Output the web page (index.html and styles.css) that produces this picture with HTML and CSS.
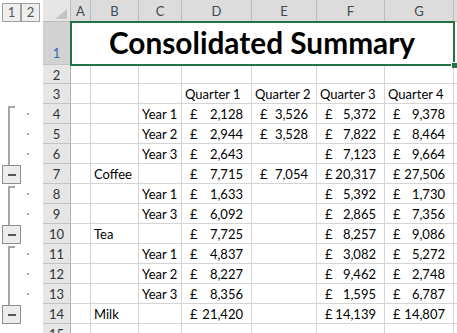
FILE: index.html
```html
<!DOCTYPE html>
<html lang="en">
<head>
    <meta charset="UTF-8">
    <meta name="viewport" content="width=device-width, initial-scale=1.0">
    <title>Consolidated Summary</title>
    <link rel="stylesheet" href="styles.css">
</head>
<body>
<div class="app">
    <div class="gutter">
        <div class="levels">
            <span class="lvl">1</span>
            <span class="lvl">2</span>
        </div>
        <svg class="outline" width="43" height="311" viewBox="0 22 43 311">
            <g fill="none" stroke="#a6a6a6" stroke-width="2">
                <path d="M15 107 H9 V165"/>
                <path d="M15 187 H9 V225"/>
                <path d="M15 247 H9 V305"/>
            </g>
            <g fill="#a6a6a6">
                <rect x="27" y="113" width="2" height="2"/>
                <rect x="27" y="133" width="2" height="2"/>
                <rect x="27" y="153" width="2" height="2"/>
                <rect x="27" y="193" width="2" height="2"/>
                <rect x="27" y="213" width="2" height="2"/>
                <rect x="27" y="253" width="2" height="2"/>
                <rect x="27" y="273" width="2" height="2"/>
                <rect x="27" y="293" width="2" height="2"/>
            </g>
            <g fill="#ececec" stroke="#8e8e8e">
                <rect x="2.5" y="165.5" width="18" height="18"/>
                <rect x="2.5" y="225.5" width="18" height="18"/>
                <rect x="2.5" y="305.5" width="18" height="18"/>
            </g>
            <g fill="#555">
                <rect x="8" y="174" width="8" height="2"/>
                <rect x="8" y="234" width="8" height="2"/>
                <rect x="8" y="314" width="8" height="2"/>
            </g>
        </svg>
    </div>

    <div class="sheet">
        <div class="row head">
            <div class="corner"><svg width="27" height="21"><polygon points="12,19 24,19 24,9" fill="#c4c4c4"/></svg></div>
            <div class="col">A</div>
            <div class="col">B</div>
            <div class="col">C</div>
            <div class="col">D</div>
            <div class="col">E</div>
            <div class="col">F</div>
            <div class="col">G</div>
            <div class="col"></div>
        </div>

        <div class="row r1">
            <div class="num sel">1</div>
            <div class="c title">Consolidated Summary<span class="handle"></span></div>
            <div class="c"></div>
        </div>

        <div class="row r2">
            <div class="num">2</div>
            <div class="c"></div><div class="c"></div><div class="c"></div><div class="c"></div>
            <div class="c"></div><div class="c"></div><div class="c"></div><div class="c"></div>
        </div>

        <div class="row">
            <div class="num">3</div>
            <div class="c"></div><div class="c"></div><div class="c"></div>
            <div class="c">Quarter 1</div>
            <div class="c">Quarter 2</div>
            <div class="c">Quarter 3</div>
            <div class="c">Quarter 4</div>
            <div class="c"></div>
        </div>

        <div class="row">
            <div class="num">4</div>
            <div class="c"></div><div class="c"></div>
            <div class="c">Year 1</div>
            <div class="c cur"><span>£</span><span>2,128</span></div>
            <div class="c cur"><span>£</span><span>3,526</span></div>
            <div class="c cur"><span>£</span><span>5,372</span></div>
            <div class="c cur"><span>£</span><span>9,378</span></div>
            <div class="c"></div>
        </div>

        <div class="row">
            <div class="num">5</div>
            <div class="c"></div><div class="c"></div>
            <div class="c">Year 2</div>
            <div class="c cur"><span>£</span><span>2,944</span></div>
            <div class="c cur"><span>£</span><span>3,528</span></div>
            <div class="c cur"><span>£</span><span>7,822</span></div>
            <div class="c cur"><span>£</span><span>8,464</span></div>
            <div class="c"></div>
        </div>

        <div class="row">
            <div class="num">6</div>
            <div class="c"></div><div class="c"></div>
            <div class="c">Year 3</div>
            <div class="c cur"><span>£</span><span>2,643</span></div>
            <div class="c"></div>
            <div class="c cur"><span>£</span><span>7,123</span></div>
            <div class="c cur"><span>£</span><span>9,664</span></div>
            <div class="c"></div>
        </div>

        <div class="row">
            <div class="num">7</div>
            <div class="c"></div>
            <div class="c">Coffee</div>
            <div class="c"></div>
            <div class="c cur"><span>£</span><span>7,715</span></div>
            <div class="c cur"><span>£</span><span>7,054</span></div>
            <div class="c cur"><span>£</span><span>20,317</span></div>
            <div class="c cur"><span>£</span><span>27,506</span></div>
            <div class="c"></div>
        </div>

        <div class="row">
            <div class="num">8</div>
            <div class="c"></div><div class="c"></div>
            <div class="c">Year 1</div>
            <div class="c cur"><span>£</span><span>1,633</span></div>
            <div class="c"></div>
            <div class="c cur"><span>£</span><span>5,392</span></div>
            <div class="c cur"><span>£</span><span>1,730</span></div>
            <div class="c"></div>
        </div>

        <div class="row">
            <div class="num">9</div>
            <div class="c"></div><div class="c"></div>
            <div class="c">Year 3</div>
            <div class="c cur"><span>£</span><span>6,092</span></div>
            <div class="c"></div>
            <div class="c cur"><span>£</span><span>2,865</span></div>
            <div class="c cur"><span>£</span><span>7,356</span></div>
            <div class="c"></div>
        </div>

        <div class="row">
            <div class="num">10</div>
            <div class="c"></div>
            <div class="c">Tea</div>
            <div class="c"></div>
            <div class="c cur"><span>£</span><span>7,725</span></div>
            <div class="c"></div>
            <div class="c cur"><span>£</span><span>8,257</span></div>
            <div class="c cur"><span>£</span><span>9,086</span></div>
            <div class="c"></div>
        </div>

        <div class="row">
            <div class="num">11</div>
            <div class="c"></div><div class="c"></div>
            <div class="c">Year 1</div>
            <div class="c cur"><span>£</span><span>4,837</span></div>
            <div class="c"></div>
            <div class="c cur"><span>£</span><span>3,082</span></div>
            <div class="c cur"><span>£</span><span>5,272</span></div>
            <div class="c"></div>
        </div>

        <div class="row">
            <div class="num">12</div>
            <div class="c"></div><div class="c"></div>
            <div class="c">Year 2</div>
            <div class="c cur"><span>£</span><span>8,227</span></div>
            <div class="c"></div>
            <div class="c cur"><span>£</span><span>9,462</span></div>
            <div class="c cur"><span>£</span><span>2,748</span></div>
            <div class="c"></div>
        </div>

        <div class="row">
            <div class="num">13</div>
            <div class="c"></div><div class="c"></div>
            <div class="c">Year 3</div>
            <div class="c cur"><span>£</span><span>8,356</span></div>
            <div class="c"></div>
            <div class="c cur"><span>£</span><span>1,595</span></div>
            <div class="c cur"><span>£</span><span>6,787</span></div>
            <div class="c"></div>
        </div>

        <div class="row">
            <div class="num">14</div>
            <div class="c"></div>
            <div class="c">Milk</div>
            <div class="c"></div>
            <div class="c cur"><span>£</span><span>21,420</span></div>
            <div class="c"></div>
            <div class="c cur"><span>£</span><span>14,139</span></div>
            <div class="c cur"><span>£</span><span>14,807</span></div>
            <div class="c"></div>
        </div>

        <div class="row">
            <div class="num">15</div>
            <div class="c"></div><div class="c"></div><div class="c"></div><div class="c"></div>
            <div class="c"></div><div class="c"></div><div class="c"></div><div class="c"></div>
        </div>
    </div>
</div>
</body>
</html>
```

FILE: styles.css
```css
html, body { margin: 0; height: 100%; overflow: hidden; background: #fff; }
body { font-family: Lato, "Liberation Sans", sans-serif; color: #000; }

.app { display: flex; align-items: flex-start; }

/* outline gutter */
.gutter { width: 43px; flex: none; display: flex; flex-direction: column; }
.levels { height: 22px; box-sizing: border-box; padding: 3px 0 0 2px; display: flex; }
.lvl { width: 19px; height: 19px; box-sizing: border-box; border: 1px solid #a0a0a0; background: #efefef;
       color: #555; font-size: 13px; line-height: 17px; text-align: center; }
.outline { display: block; }

/* sheet grid */
.sheet { flex: 1; display: flex; flex-direction: column; }
.row { display: grid; grid-template-columns: 28px 20px 48px 43px 70px 65px 68px 69px 1fr;
       grid-template-rows: 100%; height: 20px; flex: none; }
.row > div { box-sizing: border-box; border-right: 1px solid #d4d4d4; border-bottom: 1px solid #d4d4d4;
             font-size: 13px; line-height: 20px; white-space: nowrap; overflow: visible; }
.row.head { height: 22px; }
.row.r1 { height: 43px; }
.row.r2 { height: 19px; }

.head > div { background: #dcdcdc; border-color: #bdbdbd; color: #404a52; text-align: center;
              font-size: 13px; line-height: 22px; }
.head > .corner { background: #e6e6e6; }
.corner svg { display: block; }

.num { background: #e6e6e6; border-color: #c4c4c4 !important; border-right-color: #b0b0b0 !important;
       text-align: center; color: #333; }
.num.sel { background: #d2d2d2; color: #2c69b0; padding-top: 21px; }

.c { padding-left: 3px; }
.cur { display: flex; justify-content: space-between; padding: 0 8px; }

.title { grid-column: span 7; position: relative; text-align: center; font-weight: 700;
         font-size: 29.8px !important; line-height: 38px !important; padding: 2px 0 0;
         outline: 2px solid #217346; outline-offset: -1px; }
.handle { position: absolute; right: -4px; bottom: -4px; width: 5px; height: 5px;
          background: #217346; border: 1px solid #fff; border-width: 1px 0 0 1px; }
```
